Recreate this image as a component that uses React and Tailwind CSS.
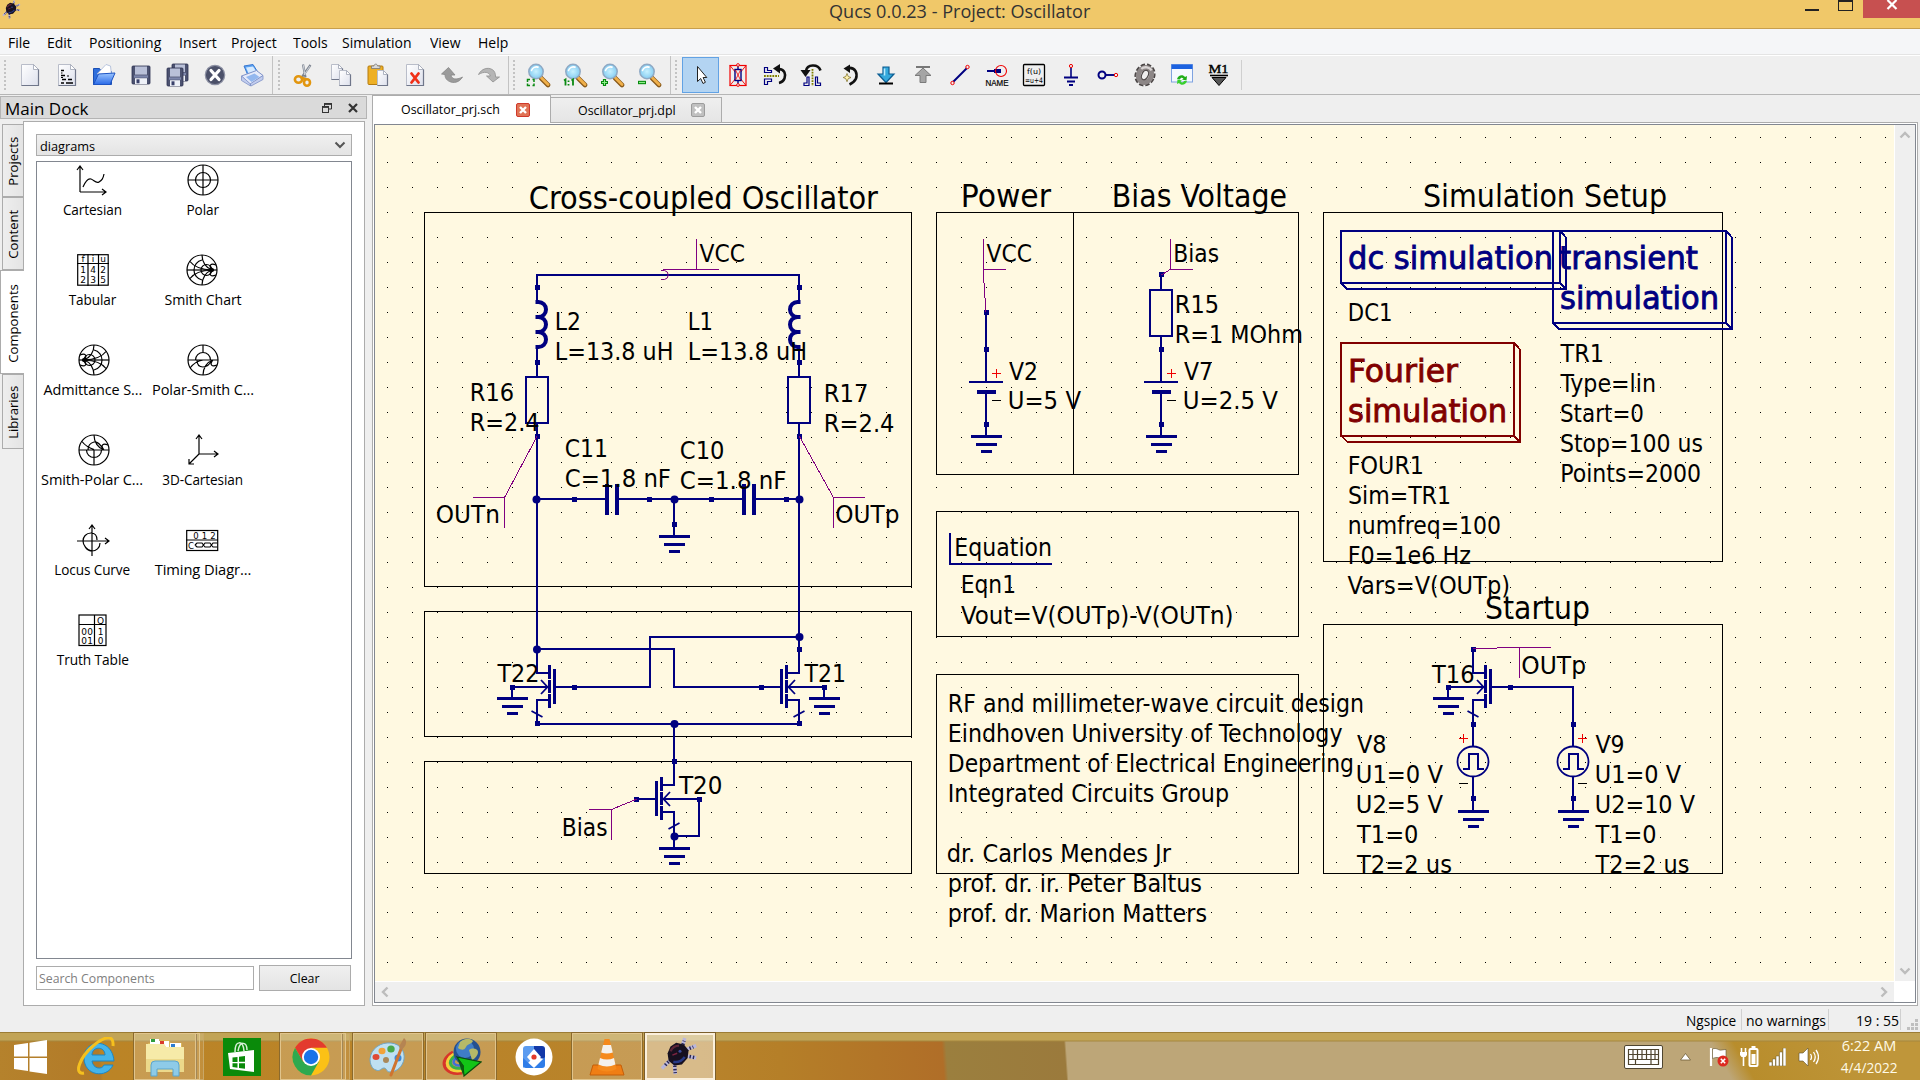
import React from 'react';

const NAVY = '#000080';
const PLUM = '#800080';

/* ---------- toolbar icons (26 x 26) ---------- */

function Ico({ children }) {
  return (
    <svg width="26" height="26" viewBox="0 0 26 26" fill="none">
      {children}
    </svg>
  );
}

const Page = ({ x = 4.5, y = 2.5, w = 17, h = 21, f = 5 }) => (
  <g>
    <path d={`M${x} ${y}h${w - f}l${f} ${f}v${h - f}h-${w}z`} fill="url(#paper)" stroke="#b9bdc9" strokeWidth="1" />
    <path d={`M${x + w - f} ${y}v${f}h${f}z`} fill="#fff" stroke="#9da3b3" strokeWidth="0.8" />
    <path d={`M${x + w} ${y + f}v${h - f}h-${w}`} stroke="#6f768a" strokeWidth="1.2" />
  </g>
);

const Floppy = ({ x = 4, y = 4, w = 18, h = 18 }) => (
  <g>
    <rect x={x} y={y} width={w} height={h} rx="1" fill="#4c5270" stroke="#2c3150" strokeWidth="0.8" />
    <rect x={x + 3} y={y + 0.5} width={w - 6} height={h * 0.45} fill="#b9c0d8" />
    <rect x={x + 2} y={y + h * 0.52} width={w - 4} height={h * 0.13} fill="#7d86ab" />
    <rect x={x + 3} y={y + h * 0.68} width={w - 6} height={h * 0.32} fill="#eef1f8" />
    <rect x={x + 4.5} y={y + h * 0.74} width="3" height={h * 0.22} fill="#39406a" />
  </g>
);

const Lens = ({ children }) => (
  <g>
    <path d="M16 16l7 7" stroke="#8a5a1a" strokeWidth="4.6" strokeLinecap="round" />
    <path d="M16.5 16l6.5 6.4" stroke="#f0b04a" strokeWidth="2.8" strokeLinecap="round" />
    <circle cx="11" cy="9.5" r="7.2" fill="url(#glass)" stroke="#8fa9c4" strokeWidth="1.5" />
    <path d="M6.5 8.5c1-3 4-4 6.5-3.4" stroke="#fff" strokeWidth="1.6" strokeLinecap="round" />
    {children}
  </g>
);

const icons = {
  fresh: <Page />,
  text: (
    <g>
      <Page />
      <path d="M7 8.5h3M7 13.5h4M8 17.5h4M14 17.5h4M7 21h3M12 21h7" stroke="#000" strokeWidth="1.6" />
      <path d="M7 11h1.500M13 14h2M7 15.500h2" stroke="#000" strokeWidth="1" />
    </g>
  ),
  open: (
    <g>
      <path d="M2.5 6.5h6l2 3h10v13h-18z" fill="#2f6fdc" stroke="#1b4fb5" />
      <path d="M6 12l9-9.5 4.5 1.5 1 9z" fill="#fff" stroke="#a8b7d6" strokeWidth="0.8" />
      <path d="M2.5 22.5l5-10.5 16.5-1-5 11.5z" fill="url(#folder)" stroke="#1d54c4" />
    </g>
  ),
  save: <Floppy />,
  saveAll: (
    <g>
      <Floppy x={7} y={2} w={16} h={17} />
      <Floppy x={2} y={6} w={16} h={18} />
    </g>
  ),
  close: (
    <g>
      <circle cx="13" cy="13" r="9.7" fill="#4b5069" stroke="#8d91a4" strokeWidth="1.2" />
      <path d="M9 8.5l8 9M17 8.5l-8 9" stroke="#fff" strokeWidth="3.2" strokeLinecap="round" />
    </g>
  ),
  print: (
    <g>
      <path d="M5 4l9-1.5 5 8-10 3z" fill="#5aa2f2" stroke="#3a78d0" />
      <path d="M7 5.500l7-1 4 6-8 2z" fill="#d6eaff" />
      <path d="M2.5 14l15-5.500 6.500 5-13 9z" fill="#e6ebfa" stroke="#7f92c8" />
      <path d="M2.5 14v4.500l9 5.500v-2z M11 22l13-8.500v4l-12 6.500z" fill="#c2cdee" stroke="#7f92c8" strokeWidth="0.8" />
      <path d="M7 15l8.500-3.500 5 3.500-8 5z" fill="#93b7ee" />
    </g>
  ),
  cut: (
    <g>
      <path d="M12 2.500l2.500 13M19.500 3l-8.500 12" stroke="#7d8490" strokeWidth="2.200" />
      <path d="M12.200 3l1.800 10M19 4l-6 9" stroke="#d7dbe2" strokeWidth="0.900" />
      <ellipse cx="7.500" cy="17.500" rx="3.600" ry="3.300" stroke="#e2960f" strokeWidth="2.600" />
      <ellipse cx="16" cy="20.500" rx="3" ry="3.300" stroke="#e2960f" strokeWidth="2.600" />
      <path d="M10 15.500l5 2" stroke="#e2960f" strokeWidth="2.600" />
    </g>
  ),
  copy: (
    <g>
      <Page x={3.5} y={2.5} w={11} h={15} f={4} />
      <Page x={11.500} y={8.500} w={11} h={15} f={4} />
    </g>
  ),
  paste: (
    <g>
      <rect x="3" y="4" width="15" height="18.500" rx="1" fill="#eeb025" stroke="#b47b10" />
      <path d="M6.500 6.500v-2.500h2.500c0-2.500 3.500-2.500 3.500 0h2.500v2.500z" fill="#d9d9d9" stroke="#777" strokeWidth="0.800" />
      <Page x={12.500} y={8.500} w={10} h={15} f={4} />
    </g>
  ),
  remove: (
    <g>
      <Page />
      <path d="M9.500 11.500l7 9M16.500 11.500l-7 9" stroke="#f03018" strokeWidth="2.800" strokeLinecap="round" />
    </g>
  ),
  undo: (
    <path d="M2.500 12l7-6.500 6.500 7.500h-4c.5 4 5 5.500 11.500 2-3 5.500-9 6.500-13 4.500-3.500-1.700-4.500-4-4.500-7z" fill="#9b9b9b" stroke="#858585" strokeWidth="0.800" />
  ),
  redo: (
    <path d="M23.500 15l-6.500 5-6.500-6h3.800c-1-4-6-5-11.800-1.500 3-6 9.500-7.500 13.700-5 2.600 1.600 3.300 4 3.400 7.500z" fill="#b5b5b5" stroke="#8f8f8f" strokeWidth="0.800" />
  ),
  zoomFit: <Lens><path d="M2.500 20v-2.500H5M7.500 17.500H9V20M2.500 21.500V23.500H5M7.500 23.500H9V21.500" stroke="#0a8a12" strokeWidth="1.500" /></Lens>,
  zoomOne: (
    <Lens>
      <path d="M2 18.500l1.500-1v6M9.500 18.500l1.500-1v6" stroke="#0a8a12" strokeWidth="1.800" />
      <path d="M6.500 18.500v1.500M6.500 22v1.500" stroke="#0a8a12" strokeWidth="1.800" />
    </Lens>
  ),
  zoomIn: (
    <Lens>
      <path d="M5.500 17v7M2 20.500h7" stroke="#078a0e" strokeWidth="3.200" />
      <path d="M5.500 18v5M3 20.500h5" stroke="#8df08a" strokeWidth="1" />
    </Lens>
  ),
  zoomOut: (
    <Lens>
      <path d="M2 20.500h8" stroke="#078a0e" strokeWidth="3.400" />
      <path d="M3 20.500h6" stroke="#8df08a" strokeWidth="1.200" />
    </Lens>
  ),
  select: <path d="M9.500 4.500v15l3.200-3 2.300 5 2.400-1.200-2.300-4.800h3.700z" fill="#fff" stroke="#222" strokeWidth="1" />,
  deactivate: (
    <g>
      <rect x="5" y="3.500" width="16" height="20" stroke="#f00000" strokeWidth="1.200" />
      <path d="M5 3.500l16 20M21 3.500l-16 20" stroke="#f00000" strokeWidth="0.900" />
      <path d="M13 3v4M13 19v4" stroke={NAVY} strokeWidth="1.400" />
      <rect x="10" y="7.500" width="6" height="11" fill="#efefef" stroke={NAVY} strokeWidth="1.400" />
      <path d="M10.500 8l5 10M15.500 8l-5 10" stroke="#f00000" strokeWidth="0.800" />
      <circle cx="13" cy="3" r="1.400" stroke="#f00000" fill="#efefef" strokeWidth="0.900" />
      <circle cx="13" cy="23" r="1.400" stroke="#f00000" fill="#efefef" strokeWidth="0.900" />
    </g>
  ),
  mirrorX: (
    <g>
      <path d="M2.500 5.500v5h7v-2h-4v-3zM2.500 22.500v-5.500h7v2.500h-4v3z" stroke={NAVY} strokeWidth="1.200" />
      <path d="M2 14h15" stroke="#808000" strokeWidth="1.800" strokeDasharray="1.800 1" />
      <path d="M16 7c7-.5 8 6 6.500 9.500-1 2.500-3 4-5.500 4.500" stroke="#111" strokeWidth="2.600" />
      <path d="M11 6.500l7-4.500v9.500z" fill="#111" />
    </g>
  ),
  mirrorY: (
    <g>
      <path d="M5 23.500h5v-8.500H8v6H5zM21.500 23.500h-5v-8.500h2v6h3z" stroke={NAVY} strokeWidth="1.200" />
      <path d="M13.500 7v17" stroke="#808000" strokeWidth="1.800" strokeDasharray="1.800 1" />
      <path d="M7 9c1-7 12-7.500 14.500-.5" stroke="#111" strokeWidth="2.600" />
      <path d="M1.500 8h10l-5 7z" fill="#111" />
    </g>
  ),
  rotate: (
    <g>
      <path d="M12 6c8-1 9.500 6 8 10.500-1.200 2.700-3.500 4.500-6.500 6" stroke="#111" strokeWidth="2.600" />
      <path d="M7.500 6.500l6.500-4v8.500z" fill="#111" />
      <path d="M11 11.500l1.200 3 2.800 1-2.800 1.200-1.200 3-1.200-3-2.600-1.200 2.600-1z" fill="#fff3b0" stroke="#7a6a20" strokeWidth="0.700" />
    </g>
  ),
  into: (
    <g>
      <path d="M10 5h6v7h5l-8 8.500-8-8.500h5z" fill="#35a9dc" stroke="#0a5c92" strokeWidth="1.200" />
      <path d="M11.500 6.500v7" stroke="#b8ecff" strokeWidth="1.600" />
      <path d="M6 21.500h14" stroke="#000" strokeWidth="2" />
    </g>
  ),
  outOf: (
    <g>
      <path d="M6 5h14" stroke="#777" strokeWidth="2" />
      <path d="M10 20.500h6v-7h5l-8-7.500-8 7.500h5z" fill="#a5a5a5" stroke="#7b7b7b" strokeWidth="1" />
    </g>
  ),
  wire: (
    <g>
      <path d="M6 20L20 6" stroke={NAVY} strokeWidth="1.900" />
      <circle cx="5.500" cy="21" r="1.700" fill="#efefef" stroke="#f00000" />
      <circle cx="20.500" cy="5" r="1.700" fill="#efefef" stroke="#f00000" />
    </g>
  ),
  label: (
    <g>
      <path d="M3 9h8" stroke={NAVY} strokeWidth="2" />
      <path d="M10 9h7" stroke={NAVY} strokeWidth="4" />
      <circle cx="17" cy="9" r="5.500" stroke="#f00000" strokeWidth="1.100" />
      <text x="1.500" y="23.500" fontFamily="Liberation Sans, sans-serif" fontSize="8.500" fill="#000" stroke="#000" strokeWidth="0.200" textLength="23" lengthAdjust="spacingAndGlyphs">NAME</text>
    </g>
  ),
  equation: (
    <g>
      <rect x="2.500" y="2.500" width="21" height="21" rx="1" stroke="#000" strokeWidth="1.300" />
      <text x="6" y="11.500" fontFamily="DejaVu Sans, sans-serif" fontSize="7.500" fill="#000" textLength="14" lengthAdjust="spacingAndGlyphs">f(u)</text>
      <text x="4" y="20.500" fontFamily="DejaVu Sans, sans-serif" fontSize="7.500" fill="#000" textLength="18" lengthAdjust="spacingAndGlyphs">=u+4</text>
    </g>
  ),
  ground: (
    <g>
      <path d="M13 6v9" stroke={NAVY} strokeWidth="1.600" />
      <path d="M6 15.500h14M9 19.500h8M11 23h4" stroke={NAVY} strokeWidth="1.900" />
      <circle cx="13" cy="4" r="1.600" stroke="#f00000" />
    </g>
  ),
  port: (
    <g>
      <circle cx="7" cy="13" r="3.500" stroke={NAVY} strokeWidth="2" />
      <path d="M10.500 13h9" stroke={NAVY} strokeWidth="1.900" />
      <circle cx="21" cy="13" r="1.700" fill="#efefef" stroke="#f00000" />
    </g>
  ),
  gear: (
    <g transform="rotate(25 13 13)">
      <ellipse cx="13" cy="13" rx="8.800" ry="10.200" stroke="#4a4545" strokeWidth="3" strokeDasharray="4.200 1.800" />
      <ellipse cx="13" cy="13" rx="6.500" ry="7.600" stroke="#8d8787" strokeWidth="5" />
      <path d="M7 9c2-4 7-5 10-3" stroke="#d9d5d5" strokeWidth="2.400" />
      <ellipse cx="13" cy="13" rx="3.200" ry="5" fill="#efefef" stroke="#4a4545" strokeWidth="1.200" />
    </g>
  ),
  view: (
    <g>
      <rect x="2.500" y="2.500" width="21" height="17.500" fill="#f4f8ff" stroke="#7fa3e0" />
      <rect x="2.500" y="2.500" width="21" height="4.500" fill="#1c62e0" />
      <path d="M8 17c1-4 6-5 8-2l2-1-.5 4.500-4.500-1 1.500-1c-1.500-1.500-3-1-3.500 1z" fill="#1fae1a" />
      <path d="M18 19c-1 4-6 5-8 2l-2 1 .5-4.500 4.500 1-1.500 1c1.500 1.500 3 1 3.500-.5z" fill="#38d02c" />
    </g>
  ),
  marker: (
    <g>
      <text x="2.500" y="11" fontFamily="Liberation Serif, serif" fontSize="13" fill="#000" stroke="#000" strokeWidth="0.400" textLength="20" lengthAdjust="spacingAndGlyphs">M1</text>
      <path d="M4 13.500h18" stroke="#000" strokeWidth="1.600" />
      <path d="M6 15.500h14l-7 8z" fill="#555" stroke="#000" />
    </g>
  ),
};

const groups = [
  { cls: 'w-[273px] pl-[11px] border-r', items: ['fresh', 'text', 'open', 'save', 'saveAll', 'close', 'print'], grip: 'ml-[-7px]' },
  { cls: 'w-[236px] pl-[12px] border-r', items: ['cut', 'copy', 'paste', 'remove', 'undo', 'redo'], grip: 'ml-[-7px]' },
  { cls: 'w-[162px] pl-[10px] border-r', items: ['zoomFit', 'zoomOne', 'zoomIn', 'zoomOut'], grip: 'ml-[-6px]' },
  {
    cls: 'w-[570px] pl-[11px]',
    items: ['select', 'deactivate', 'mirrorX', 'mirrorY', 'rotate', 'into', 'outOf', 'wire', 'label', 'equation', 'ground', 'port', 'gear', 'view', 'marker'],
    grip: 'ml-[-7px]',
  },
];

function Grip({ cls }) {
  return (
    <div className={`flex w-[2px] shrink-0 flex-col gap-[2px] ${cls}`}>
      {Array.from({ length: 8 }, (_, i) => (
        <span key={i} className="h-[2px] w-[2px] bg-[#c3c3c3]" />
      ))}
    </div>
  );
}

function Toolbar() {
  return (
    <div className="flex h-[40px] items-stretch border-t border-b border-t-white border-b-[#b5b5b5] bg-[#efefef]">
      {groups.map((g, gi) => (
        <div key={gi} className={`flex shrink-0 items-center border-[#c3c3c3] ${g.cls}`}>
          <Grip cls={g.grip} />
          <div className={`flex shrink-0 ${gi < 2 ? 'ml-[5px]' : gi === 3 ? 'ml-[5px]' : 'ml-[4px]'}`}>
            {g.items.map((n) => (
              <div
                key={n}
                className={`flex h-[36px] w-[37px] items-center justify-center ${n === 'select' ? 'border border-[#62a2e4] bg-[#b3d4f2]' : ''}`}
              >
                <Ico>{icons[n]}</Ico>
              </div>
            ))}
          </div>
        </div>
      ))}
      <div className="my-[4px] w-px bg-[#cfcfcf]" />
    </div>
  );
}

/* ---------- title bar and menu ---------- */

function Bug({ size }) {
  return (
    <svg width={size} height={size} viewBox="0 0 42 42">
      <path d="M23 11L26 1M28 13l10-4M11 24L2 33M15 27l1 12M28 20l10 2" stroke="#b9b6dc" strokeWidth="3.600" />
      <path d="M24 8l1.500-4M31 12l4-1.500M9 26l-5 5M15.500 30l.5 8M31 20.500l5 1" stroke="#2b2750" strokeWidth="3.600" strokeDasharray="1.500 2" />
      <path d="M8 17l3-7 6-4 8 2 5 6-1 8-6 7-8 1-6-5z" fill="#17101f" />
      <path d="M11 15c2-4 5-6 9-6" stroke="#5c2436" strokeWidth="2.500" fill="none" />
      <path d="M14 26c5 1 9-1 12-5" stroke="#283a86" strokeWidth="2.600" fill="none" />
      <path d="M13 19l5-2" stroke="#7d2440" strokeWidth="1.600" />
      <circle cx="21" cy="15" r="1.600" fill="#3c4a9a" />
    </svg>
  );
}

function TitleBar() {
  return (
    <div className="flex h-[29px] items-start border-b border-[#c79f4d] bg-[#f0c869]">
      <div className="w-[829px] pl-[2px]"><Bug size={20} /></div>
      <div className="mt-[-2px] w-[262px] origin-left scale-x-[0.977] text-[18.500px] leading-[25px] whitespace-nowrap text-[#333]">Qucs 0.0.23 - Project: Oscillator</div>
      <div className="ml-auto flex items-start">
        <span className="mt-[9px] h-[2px] w-[14px] bg-[#222]" />
        <span className="ml-[19px] h-[11px] w-[15px] border border-t-2 border-[#222]" />
        <div className="ml-[10px] flex h-[18px] w-[57px] justify-center bg-[#c75050]">
          <svg width="12" height="10" viewBox="0 0 12 10"><path d="M1.500 0l9 9M10.500 0l-9 9" stroke="#fff" strokeWidth="2.200" /></svg>
        </div>
      </div>
    </div>
  );
}

const menus = [
  ['File', 'w-[39px]'], ['Edit', 'w-[42px]'], ['Positioning', 'w-[90px]'], ['Insert', 'w-[52px]'], ['Project', 'w-[62px]'],
  ['Tools', 'w-[49px]'], ['Simulation', 'w-[88px]'], ['View', 'w-[48px]'], ['Help', 'w-[50px]'],
];

function MenuBar() {
  return (
    <div className="flex h-[26px] border-b border-[#e4e4e4] bg-[#f5f6f8] pl-[8px] text-[14.500px] leading-[27px] text-black">
      {menus.map(([m, w]) => (
        <span key={m} className={`${w} origin-left scale-x-[0.965] whitespace-nowrap`}>{m}</span>
      ))}
    </div>
  );
}

/* ---------- dock ---------- */

const Digits = ({ rows, fs = 9 }) => rows.map(([x, y, t], i) => (
  <text key={i} x={x} y={y} fontFamily="DejaVu Sans, sans-serif" fontSize={fs} fill="#000" stroke="none" textAnchor="middle">{t}</text>
));

const SmithHalf = () => (
  <g>
    <path d="M16 6a10 10 0 0 0-8 10a10 10 0 0 0 8 10" />
    <circle cx="20.500" cy="16" r="5.500" />
    <path d="M4 7.500c3 4 8 8 22 8.500M4 24.500c3-4 8-8 22-8.500M16 1c0 7 4 13 10 15M16 31c0-7 4-13 10-15M30 11c-5-2-8 0-4 5M30 21c-5 2-8 0-4-5" />
    <circle cx="26" cy="16" r="1.500" fill="#000" />
  </g>
);

const diagrams = [
  ['Cartesian', <g key="a"><path d="M2 28V2M-1 6l3-4 3 4M2 28h26M24 25l4 3-4 3M5 23c3-7 5-9 8-8s5 5 8 3 4-3 5-8" transform="translate(1 0)" /></g>],
  ['Polar', <g key="b"><circle cx="16" cy="16" r="15" /><circle cx="16" cy="16" r="7.500" /><path d="M1 16h30M16 1v30" /></g>],
  ['Tabular', <g key="c"><rect x="0.700" y="0.700" width="30.500" height="30.500" /><path d="M0 9.500h32M11 0v32M21.500 0v32" /><Digits rows={[[6, 8, 'f'], [16, 8, 'i'], [26, 8, 'u'], [6, 19, '1'], [16, 19, '4'], [26, 19, '2'], [6, 29, '2'], [16, 29, '3'], [26, 29, '5']]} /></g>],
  ['Smith Chart', <g key="d" transform="translate(-1 0)"><circle cx="16" cy="16" r="15" /><path d="M1 16h30" /><SmithHalf /></g>],
  ['Admittance S...', <g key="e" transform="translate(33 0) scale(-1 1)"><circle cx="16" cy="16" r="15" /><path d="M1 16h30" /><SmithHalf /></g>],
  ['Polar-Smith C...', <g key="f"><circle cx="16" cy="16" r="15" /><path d="M1 16h30M16 1v7M8.500 16a7.500 7.500 0 0 1 15 0M3 24c3-4 7-7 13-8M16 31c0-7 4-13 10-15M10 16c0 4 2 7 6 7s7-3 9-7M30 21c-5 2-8 0-4-5" /></g>],
  ['Smith-Polar C...', <g key="g" transform="translate(1 0)"><circle cx="16" cy="16" r="15" /><path d="M1 16h30M16 16v15M8.500 16a7.500 7.500 0 0 0 15 0M4 7.500c3 4 6 6 12 8M16 1c0 7 4 13 10 15M10 16c0-4 2-7 6-8s7 4 10 8M30 11c-5-2-8 0-4 5" /></g>],
  ['3D-Cartesian', <g key="h"><path d="M12 20V1M9 5l3-4 3 4M12 20h19M27 17l4 3-4 3M12 20L2 30M2 25v5h5" /></g>],
  ['Locus Curve', <g key="i"><path d="M0 17h32M28 14l4 3-4 3M15 32V1M12 5l3-4 3 4M20 16c0-5-3-7-6-7-5 0-8 4-8 8s4 10 9 10c4 0 8-3 8-8" /></g>],
  ['Timing Diagr...', <g key="j" transform="translate(-1 0)"><rect x="0.700" y="6.500" width="31" height="20" /><path d="M0 16h32M9 21l2-2h5l3 4h5l3-4h4M9 21l2 2h5l3-4h5l3 4h4" /><Digits fs={8.5} rows={[[10, 14.500, '0'], [18.500, 14.500, '1'], [27, 14.500, '2'], [5, 25, 'C']]} /></g>],
  ['Truth Table', <g key="k"><rect x="2" y="1" width="27" height="30.500" /><path d="M2 10.500h27M17.500 1v31" /><Digits rows={[[23.500, 9.500, 'Q'], [7, 21, '0'], [13, 21, '0'], [23.500, 21, '1'], [7, 30, '0'], [13, 30, '1'], [23.500, 30, '0']]} /></g>],
];

const wide = {
  'Smith Chart': 'scale-x-[1.010]',
  'Admittance S...': 'scale-x-[1.030]',
  'Polar-Smith C...': 'scale-x-[1.040]',
  'Smith-Polar C...': 'scale-x-[1.040]',
  'Timing Diagr...': 'scale-x-[1.050]',
  'Truth Table': 'scale-x-[0.980]',
};

function SideTab({ label, h, active }) {
  return (
    <div className={`flex items-center justify-center border border-[#acacac] pt-[2px] ${h} ${active ? 'w-[24px] border-r-0 bg-white' : 'ml-[2px] w-[22px] bg-gradient-to-r from-[#eeeeee] to-[#e4e4e4]'}`}>
      <span className="rotate-180 text-[13.500px] leading-[18px] whitespace-nowrap [writing-mode:vertical-rl] scale-y-[0.97]">{label}</span>
    </div>
  );
}

function Dock() {
  return (
    <div className="flex w-[367px] shrink-0 flex-col">
      <div className="mt-px flex h-[23px] items-center border border-[#b4b4b4] bg-[#dadada] pl-[4px]">
        <span className="mt-[3px] w-[100px] origin-left scale-x-[1.000] text-[17px] leading-[20px] whitespace-nowrap">Main Dock</span>
        <svg className="ml-auto" width="12" height="12" viewBox="0 0 12 12" fill="none" stroke="#333">
          <path d="M3.500 4V1.500h7V7H8" strokeWidth="1" /><path d="M3 2h8" strokeWidth="1.800" />
          <rect x="1.500" y="4.500" width="6" height="6" fill="#dadada" /><path d="M1 5h7" strokeWidth="1.800" />
        </svg>
        <svg className="mr-[7px] ml-[14px]" width="12" height="12" viewBox="0 0 12 12"><path d="M2 2l8 8M10 2l-8 8" stroke="#333" strokeWidth="2.200" /></svg>
      </div>
      <div className="mt-[2px] flex h-[885px]">
        <div className="z-10 mr-[-1px] flex w-[24px] flex-col pt-[3px]">
          <SideTab label="Projects" h="h-[73px]" />
          <SideTab label="Content" h="h-[73px]" />
          <SideTab label="Components" h="h-[104px]" active />
          <SideTab label="Libraries" h="h-[75px]" />
        </div>
        <div className="flex w-[342px] flex-col border border-[#acacac] bg-white pt-[12px] pl-[12px]">
          <div className="flex h-[22px] w-[316px] items-center border border-[#acacac] bg-gradient-to-b from-[#f0f0f0] to-[#e4e4e4] pl-[3px]">
            <span className="mt-[1px] origin-left scale-x-[0.980] text-[13px] leading-[18px]">diagrams</span>
            <svg className="mr-[5px] ml-auto" width="12" height="8" viewBox="0 0 12 8"><path d="M1.500 1.500L6 6l4.500-4.500" fill="none" stroke="#555" strokeWidth="2" /></svg>
          </div>
          <div className="mt-[5px] grid h-[798px] w-[316px] grid-cols-[111px_110px] content-start border border-[#828790] pt-[2px]">
            {diagrams.map(([label, art]) => (
              <div key={label} className="flex h-[90px] flex-col items-center">
                <svg width="32" height="32" viewBox="0 0 32 32" fill="none" stroke="#000" strokeWidth="1.200" className="overflow-visible">{art}</svg>
                <span className={`mt-[4px] text-[14px] leading-[20px] tracking-[-0.100px] whitespace-nowrap ${wide[label] || 'scale-x-[0.970]'}`}>{label}</span>
              </div>
            ))}
          </div>
          <div className="mt-[6px] flex items-center">
            <div className="flex h-[24px] w-[218px] items-center border border-[#acacac] bg-white pt-[1px] pl-[2px]">
              <span className="origin-left scale-x-[0.945] text-[13px] whitespace-nowrap text-[#808080]">Search Components</span>
            </div>
            <div className="ml-[5px] flex h-[26px] w-[92px] items-center justify-center border border-[#acacac] bg-gradient-to-b from-[#f0f0f0] to-[#e4e4e4] pt-[1px] text-[13px]">
              <span className="scale-x-[0.950]">Clear</span>
            </div>
          </div>
        </div>
      </div>
    </div>
  );
}

/* ---------- schematic primitives ---------- */

const W = ({ d, w = 2, c = NAVY }) => <path d={d} stroke={c} strokeWidth={w} fill="none" />;
const Node = ({ x, y }) => <rect x={Math.round(x - 2.5)} y={Math.round(y - 2.5)} width="5" height="5" fill={NAVY} />;
const Dot = ({ x, y }) => <circle cx={x} cy={y} r="4" fill={NAVY} />;
const Box = ({ x, y, r, b }) => <rect x={x} y={y} width={r - x} height={b - y} stroke="#000" strokeWidth="1" fill="none" />;

const Gnd = ({ x, y, from }) => (
  <g>
    <W d={`M${x} ${from}V${y}`} />
    <W w={3} d={`M${x - 15} ${y + 0.5}h31M${x - 10} ${y + 8.5}h21M${x - 5} ${y + 15.5}h11`} />
  </g>
);

const Mos = ({ x, y, flip, top, bottom, bulk = 25, slash = 27 }) => (
  <g transform={`translate(${x} ${y}) scale(${flip ? -1 : 1} 1)`}>
    <W w={3} d="M-17.500 -18V17M-12.500 -22V-8M-12.500 -7V6M-12.500 7V21" />
    <W d={`M-12.500 -14H0V${top - y}M-12.500 13H0V${bottom - y}M-37 0H-18M-12 0H${bulk}`} />
    <g shapeRendering="auto">
      <W w={1.8} d={`M-4 -7L-10.500 0L-4 7M-5.500 ${slash + 3}L5.500 ${slash - 3}`} />
    </g>
    <rect x="-40" y="-2.500" width="5" height="5" fill={NAVY} />
    <rect x={bulk - 2.5} y="-2.500" width="5" height="5" fill={NAVY} />
  </g>
);

const Resistor = ({ x, y }) => <rect x={x - 11} y={y} width="22" height="46" fill="none" stroke={NAVY} strokeWidth="2" />;

const Coil = ({ x, s }) => (
  <g shapeRendering="auto">
    <W w={4} d={`M${x - s * 1.500} 302h${s * 3}a7.500 7.500 0 0 ${s > 0 ? 1 : 0} 0 15h${-s * 3}h${s * 3}a7.500 7.500 0 0 ${s > 0 ? 1 : 0} 0 15h${-s * 3}h${s * 3}a7.500 7.500 0 0 ${s > 0 ? 1 : 0} 0 15h${-s * 3}`} />
  </g>
);

const Plus = ({ x, y }) => <W c="#f00000" w={1} d={`M${x - 4} ${y + 0.5}h9M${x + 0.5} ${y - 4}v9`} />;
const Minus = ({ x, y }) => <W c="#000" w={1} d={`M${x - 4} ${y + 0.5}h9`} />;

const Pulse = ({ x }) => (
  <g>
    <ellipse shapeRendering="auto" cx={x} cy="761.500" rx="15.500" ry="15" fill="none" stroke={NAVY} strokeWidth="1.800" />
    <W d={`M${x - 10} 769h6v-15h9v15h6`} />
    <W d={`M${x} 724V746M${x} 776V811`} />
    <Gnd x={x} y={811} from={800} />
    <Node x={x} y={724} />
    <Node x={x} y={798.5} />
  </g>
);

const Battery = ({ x }) => (
  <g>
    <W d={`M${x - 17} 382h34M${x} 349V382M${x} 392V436`} />
    <W w={4} d={`M${x - 9} 392h19`} />
    <Gnd x={x} y={436} from={424} />
    <Node x={x + 0.500} y={349.500} />
    <Node x={x + 0.500} y={424.500} />
    <Plus x={x + 10} y={373} />
    <Minus x={x + 10} y={400} />
  </g>
);

const SimBox = ({ x, y, r, b, c }) => (
  <W c={c} d={`M${x} ${y}H${r}V${b}H${x}ZM${r} ${y}l5.500 6V${b + 6}H${x + 6}l-6 -6M${r} ${b}l5.500 6`} />
);

/* [x start, baseline, x end, string] */
const titles = [
  [530, 209, 877, 'Cross-coupled Oscillator'],
  [962, 207, 1050, 'Power'],
  [1113, 207, 1286, 'Bias Voltage'],
  [1423, 207, 1666, 'Simulation Setup'],
  [1485, 619, 1589, 'Startup'],
];
const simTitles = [
  [1350, 269, 1551, 'dc simulation', NAVY],
  [1561, 269, 1696, 'transient', NAVY],
  [1562, 309, 1717, 'simulation', NAVY],
  [1350, 382, 1456, 'Fourier', '#800000'],
  [1350, 422, 1505, 'simulation', '#800000'],
];
const labels = [
  [699.500, 262, 744, 'VCC'], [556, 330, 580, 'L2'], [556, 360, 672.500, 'L=13.8 uH'], [689, 330, 712, 'L1'], [689, 360, 806, 'L=13.8 uH'],
  [471, 401, 513, 'R16'], [471, 431, 538.500, 'R=2.4'], [825, 402, 867.500, 'R17'], [825, 432, 893.500, 'R=2.4'],
  [566, 457, 607, 'C11'], [566, 487, 670, 'C=1.8 nF'], [681, 459, 723.500, 'C10'], [681, 489, 785.500, 'C=1.8 nF'],
  [437, 523, 499, 'OUTn'], [836.500, 523, 898.500, 'OUTp'],
  [497.500, 682, 538.500, 'T22'], [804.500, 682, 845, 'T21'], [679, 794, 721.500, 'T20'], [563, 836, 606.500, 'Bias'],
  [986.500, 262, 1031, 'VCC'], [1009, 380, 1037, 'V2'], [1009, 409, 1080, 'U=5 V'],
  [1174.500, 262, 1218, 'Bias'], [1176, 313, 1218, 'R15'], [1176, 343, 1302, 'R=1 MOhm'], [1184, 380, 1212, 'V7'], [1184, 409, 1277, 'U=2.5 V'],
  [955.500, 556, 1051, 'Equation'], [962, 593, 1015, 'Eqn1'], [961, 624, 1232.500, 'Vout=V(OUTp)-V(OUTn)'],
  [949, 712, 1363, 'RF and millimeter-wave circuit design'], [949, 742, 1341.500, 'Eindhoven University of Technology'],
  [949, 772, 1353, 'Department of Electrical Engineering'], [949, 802, 1228, 'Integrated Circuits Group'],
  [948, 862, 1170, 'dr. Carlos Mendes Jr'], [949, 892, 1201, 'prof. dr. ir. Peter Baltus'], [949, 922, 1206, 'prof. dr. Marion Matters'],
  [1349, 321, 1391.500, 'DC1'], [1349, 474, 1423, 'FOUR1'], [1348, 504, 1450, 'Sim=TR1'], [1349, 534, 1500, 'numfreq=100'],
  [1349, 564, 1470, 'F0=1e6 Hz'], [1347.500, 594, 1509, 'Vars=V(OUTp)'],
  [1560.500, 362, 1603, 'TR1'], [1560.500, 392, 1655, 'Type=lin'], [1560, 422, 1643, 'Start=0'], [1560, 452, 1702, 'Stop=100 us'], [1561.500, 482, 1700, 'Points=2000'],
  [1432, 683, 1473.500, 'T16'], [1522.500, 674, 1585, 'OUTp'],
  [1357, 753, 1385.500, 'V8'], [1357, 783, 1442, 'U1=0 V'], [1357, 813, 1442, 'U2=5 V'], [1357, 843, 1417.500, 'T1=0'], [1357, 873, 1451, 'T2=2 us'],
  [1595.500, 753, 1623.500, 'V9'], [1596, 783, 1680, 'U1=0 V'], [1596, 813, 1694, 'U2=10 V'], [1595.500, 843, 1655.500, 'T1=0'], [1595.500, 873, 1688.500, 'T2=2 us'],
];

const inset = (s) => (/^[VTS]/.test(s) ? 0 : 1.2);

let grid = '';
for (let r = 0; r < 34; r += 1) {
  for (let c = 0; c < 61; c += 1) {
    grid += `M${Math.floor(387.2 + c * 24.97)} ${137 + r * 25}h1v1h-1z`;
  }
}

function Schematic() {
  return (
    <svg width="1519" height="856" viewBox="375 125 1519 856" className="block bg-[#fff9e1]">
      <defs>
        <linearGradient id="paper" x1="0" y1="0" x2="1" y2="1"><stop offset="0" stopColor="#fff" /><stop offset="1" stopColor="#dde0ec" /></linearGradient>
        <linearGradient id="folder" x1="0" y1="0" x2="0" y2="1"><stop offset="0" stopColor="#9cc6ff" /><stop offset="1" stopColor="#2a6ae8" /></linearGradient>
        <radialGradient id="glass"><stop offset="0" stopColor="#c8f1ff" /><stop offset="1" stopColor="#86cdf2" /></radialGradient>
      </defs>
      <g shapeRendering="crispEdges">
        <path d={grid} fill="#000" />
        <Box x={424.500} y={212.500} r={911.500} b={586.500} />
        <Box x={424.500} y={611.500} r={911.500} b={736.500} />
        <Box x={424.500} y={761.500} r={911.500} b={873.500} />
        <Box x={936.500} y={212.500} r={1298.500} b={474.500} />
        <Box x={936.500} y={511.500} r={1298.500} b={636.500} />
        <Box x={936.500} y={674.500} r={1298.500} b={873.500} />
        <Box x={1323.500} y={212.500} r={1722.500} b={561.500} />
        <Box x={1323.500} y={624.500} r={1722.500} b={873.500} />
        <W c="#000" w={1} d="M1073.500 212V474" />

        {/* LC tank */}
        <W d="M537 302V274M536 275H800M799 274V302M537 347V376M799 347V376M537 423V673M799 423V673" />
        <Coil x={537} s={1} />
        <Coil x={799} s={-1} />
        <Resistor x={537} y={377} />
        <Resistor x={799} y={377} />
        <W d="M537 499H606M617 499H744M754 499H799" />
        <W w={4} d="M607 484V515M617 484V515M744 484V515M754 484V515" />
        <W d="M674 499V525" />
        <Gnd x={674} y={536} from={524} />
        {[[537, 287.500], [799.500, 287.500], [537, 362.500], [799.500, 362.500], [537, 436.500], [799.500, 436.500], [574.500, 499.500], [649.500, 499.500], [711.500, 499.500], [786.500, 499.500], [674.500, 524.500]].map(([x, y]) => (
          <Node key={`${x}-${y}`} x={x} y={y} />
        ))}

        {/* cross-coupled pair */}
        <W d="M537 649H674V687H762M799 637H650V687H575" />
        <Mos x={537} y={687} flip top={649} bottom={724} />
        <Mos x={799} y={687} top={649} bottom={724} />
        <Gnd x={512} y={698} from={687} />
        <Gnd x={824} y={698} from={687} />
        <W d="M537 724H799M674 724V775" />
        <Node x={537.500} y={723.500} />
        <Node x={799.500} y={723.500} />
        <Node x={799.500} y={649.500} />
        <Node x={674.500} y={761.500} />

        {/* tail transistor */}
        <Mos x={674} y={799} top={761} bottom={836} />
        <W d="M699 799V836H674" />
        <Gnd x={674} y={848} from={836} />

        {/* sources */}
        <W d="M986 312V349M1161 275V289M1161 336V349" />
        <Battery x={986} />
        <Battery x={1161} />
        <Resistor x={1161} y={289.500} />
        <Node x={986.500} y={312.500} />
        <Node x={1161.500} y={274.500} />

        <W d="M950 533V564H1052" />

        {/* start-up circuit */}
        <Mos x={1473} y={687} flip top={649} bottom={724} />
        <Gnd x={1448} y={698} from={687} />
        <W d="M1510 687H1573V724" />
        <Node x={1473.500} y={649.500} />
        <Pulse x={1473} />
        <Pulse x={1573} />
        <Plus x={1463} y={738} />
        <Minus x={1463} y={783} />
        <Plus x={1582} y={738} />
        <Minus x={1582} y={783} />

        <SimBox x={1341} y={231} r={1560} b={283} c={NAVY} />
        <SimBox x={1553} y={231} r={1726} b={323} c={NAVY} />
        <SimBox x={1341} y={343} r={1514} b={435.500} c="#800000" />

        {/* net label leaders */}
        <W c={PLUM} w={1} d="M696.500 239V269M663 269.500H719M537 436.500L504.500 497.500M473 497.500H504.500V528M799.500 436.500L833.500 497.500M865 497.500H833.500V528" />
        <W c={PLUM} w={1} d="M637 799L611.500 809.500M589 809.500H611.500V840M983.500 239V283M984.500 283V298M985.500 298V312M983 269.500H1006M1170.500 239V269.500M1193 269.500H1170L1161.500 275M1473 648.500H1497M1497 647.500H1551M1519.500 647V678" />
      </g>
      <path d="M661 270.500h3.500a4.700 4.600 0 0 1 0 9h-3.500" fill="none" stroke={PLUM} strokeWidth="1" />

      {[[536.500, 499.500], [674.500, 499.500], [799.500, 499.500], [537, 649.500], [799.500, 637], [674.500, 724], [674.500, 836.500]].map(([x, y]) => (
        <Dot key={`${x}-${y}`} x={x} y={y} />
      ))}

      <g fontFamily="'DejaVu Sans Condensed', 'DejaVu Sans', sans-serif">
        <g fontSize="32.500">
          {titles.map(([x, y, r, t]) => (
            <text key={t} x={x - inset(t)} y={y} textLength={r - x + inset(t) + 1} lengthAdjust="spacingAndGlyphs">{t}</text>
          ))}
        </g>
        <g fontSize="32">
          {simTitles.map(([x, y, r, t, c]) => (
            <text key={`${t}${x}${y}`} x={x - 2} y={y} fill={c} stroke={c} strokeWidth="0.800" textLength={r - x + 4} lengthAdjust="spacingAndGlyphs">{t}</text>
          ))}
        </g>
        <g fontSize="25">
          {labels.map(([x, y, r, t]) => (
            <text key={`${t}${x}${y}`} x={x - inset(t)} y={y} textLength={r - x + inset(t) + 1} lengthAdjust="spacingAndGlyphs">{t}</text>
          ))}
        </g>
      </g>
    </svg>
  );
}

/* ---------- document area ---------- */

function CloseBox({ on }) {
  return (
    <svg width="14" height="14" viewBox="0 0 14 14">
      <rect x="0.500" y="0.500" width="13" height="13" rx="1.500" fill={on ? '#e07355' : '#c0c0c0'} stroke={on ? '#d0392b' : '#9c9c9c'} />
      <path d="M4 4l6 6M10 4l-6 6" stroke="#fff" strokeWidth="2.400" />
    </svg>
  );
}

const Arrow = ({ d, w, h }) => (
  <svg width={w} height={h} viewBox={`0 0 ${w} ${h}`}><path d={d} fill="none" stroke="#bcbcbc" strokeWidth="2.400" /></svg>
);

function Workspace() {
  return (
    <div className="ml-[5px] flex w-[1546px] shrink-0 flex-col">
      <div className="flex h-[27px] items-end">
        <div className="z-10 mb-[-1px] flex h-[28px] w-[179px] items-center border border-b-0 border-[#acacac] bg-white pl-[28px]">
          <span className="w-[115px] origin-left scale-x-[0.955] text-[13px] whitespace-nowrap">Oscillator_prj.sch</span>
          <CloseBox on />
        </div>
        <div className="flex h-[25px] w-[171px] items-center border border-b-0 border-l-0 border-[#acacac] bg-gradient-to-b from-[#efefef] to-[#e5e5e5] pl-[27px]">
          <span className="mt-[1px] w-[113px] origin-left scale-x-[0.955] text-[13px] whitespace-nowrap">Oscillator_prj.dpl</span>
          <CloseBox />
        </div>
      </div>
      <div className="h-[884px] border border-[#acacac] bg-white p-px">
        <div className="grid h-[879px] grid-cols-[1519px_20px] grid-rows-[856px_20px] gap-px border border-[#828790] bg-white">
          <Schematic />
          <div className="flex flex-col items-center justify-between bg-[#efefef] py-[6px]">
            <Arrow w={12} h={8} d="M1.500 6.500L6 2l4.500 4.500" />
            <Arrow w={12} h={8} d="M1.500 1.500L6 6l4.500-4.500" />
          </div>
          <div className="flex items-center justify-between bg-[#efefef] px-[6px]">
            <Arrow w={8} h={12} d="M6.500 1.500L2 6l4.500 4.500" />
            <Arrow w={8} h={12} d="M1.500 1.500L6 6l-4.500 4.500" />
          </div>
        </div>
      </div>
    </div>
  );
}

function StatusBar() {
  return (
    <div className="flex h-[26px] items-start justify-end bg-[#efefef] pt-[3px] text-[14px] leading-[23px]">
      <span className="w-[55px] origin-left scale-x-[0.975] whitespace-nowrap">Ngspice</span>
      <span className="h-[21px] w-px bg-[#d0d0d0]" />
      <span className="ml-[4px] w-[82px] origin-left scale-x-[1.000] whitespace-nowrap">no warnings</span>
      <span className="h-[21px] w-px bg-[#d0d0d0]" />
      <span className="ml-[27px] w-[44px] whitespace-nowrap">19 : 55</span>
      <span className="h-[21px] w-px bg-[#d0d0d0]" />
      <svg className="mt-[10px] mr-[2px] ml-[6px]" width="11" height="11" viewBox="0 0 11 11" fill="#bfbfbf">
        <path d="M8 0h3v3H8zM4 4h3v3H4zM8 4h3v3H8zM0 8h3v3H0zM4 8h3v3H4zM8 8h3v3H8z" />
      </svg>
    </div>
  );
}

/* ---------- taskbar ---------- */

const apps = {
  explorer: (
    <svg width="40" height="40" viewBox="0 0 40 40">
      <path d="M3 6h10l2-3h9l2 3h11v28H3z" fill="#d9b95a" />
      <rect x="5" y="2" width="9" height="6" fill="#fff" /><rect x="6" y="2" width="4" height="3" fill="#2f9d3c" />
      <rect x="14" y="4" width="10" height="6" fill="#fff" /><rect x="15" y="4" width="4" height="3" fill="#d93a2c" />
      <rect x="25" y="6" width="11" height="5" fill="#fff" /><rect x="26" y="7" width="4" height="3" fill="#2d7dd2" />
      <path d="M1 7h18l2 3h18v25H1z" fill="#ecd98a" /><path d="M1 7h18l2 3h18v12H1z" fill="#f6eaa8" />
      <path d="M6 39V28q0-4 4-4h20q4 0 4 4v11h-6v-7H12v7z" fill="#8ecbe8" stroke="#5ba5cc" />
    </svg>
  ),
  store: (
    <svg width="38" height="38" viewBox="0 0 38 38">
      <rect width="38" height="38" fill="#0a8a0a" />
      <path d="M5 15l26-3v22L7 31z" fill="#fff" /><path d="M12 14c0-12 8-12 9-1M15 13c2-11 9-9 9-1" stroke="#d8f0d8" strokeWidth="1.500" fill="none" />
      <path d="M9.500 19.500l5-.6v5h-5zM16 18.700l6-.7v5.800h-6zM9.500 25.200h5v4.500l-5-.6zM16 25.200h6v5.600l-6-.8z" fill="#0a8a0a" />
    </svg>
  ),
  chrome: (
    <svg width="38" height="38" viewBox="0 0 38 38">
      <circle cx="19" cy="19" r="18.500" fill="#fbc116" />
      <path d="M19 9.700h16A18.500 18.500 0 0 0 3 9.700l8 14z" fill="#e33b2e" />
      <path d="M3 9.700A18.500 18.500 0 0 0 19 37.500l8-14-8 4-8-4z" fill="#2da94f" />
      <circle cx="19" cy="19" r="9" fill="#fff" /><circle cx="19" cy="19" r="7.200" fill="#1a73e8" />
    </svg>
  ),
  paint: (
    <svg width="40" height="40" viewBox="0 0 40 40">
      <path d="M2 22C3 11 13 5 23 6s14 9 13 16-7 13-14 13c-4 0-3-4-6-4-3 0-4 4-8 2-4-1-6-6-6-11z" fill="#bfe0f2" stroke="#6fa6c6" />
      <ellipse cx="8" cy="20" rx="3.500" ry="3" fill="#df4a35" /><ellipse cx="14" cy="14" rx="3.500" ry="3.200" fill="#f2a33a" />
      <ellipse cx="23" cy="12" rx="3.700" ry="3.500" fill="#49a84a" /><ellipse cx="30" cy="21" rx="3.500" ry="3.500" fill="#3b86d6" /><circle cx="18" cy="23" r="3" fill="#a9885a" />
      <path d="M33 12L23 38" stroke="#cf7430" strokeWidth="3" strokeLinecap="round" /><path d="M36 1c4 3 2 9-3 12-4-3 0-6 3-12z" fill="#b58452" />
    </svg>
  ),
  idm: (
    <svg width="42" height="40" viewBox="0 0 42 40">
      <path d="M13 15C-3 24 4 39 22 36" stroke="#d8352a" strokeWidth="3" fill="none" /><path d="M14 17C2 24 7 36 22 33.500" stroke="#f4d03a" strokeWidth="3" fill="none" />
      <path d="M15 19C6 25 11 33 23 31" stroke="#36b24a" strokeWidth="3" fill="none" /><path d="M16 21C11 25 14 30 23 28" stroke="#3f6fd8" strokeWidth="2.500" fill="none" />
      <circle cx="27" cy="15" r="13.500" fill="#24508f" /><circle cx="25" cy="12" r="9" fill="#3f7cc6" />
      <path d="M20 5c5-4 10-4 13-1-2 4-5 2-7 6s-5 3-8 1zM29 13c4-3 9-1 9 2s-3 7-6 8z" fill="#b5b968" />
      <path d="M17 20l24 5-17 14-1-10z" fill="#12c416" stroke="#0a4d0c" strokeWidth="1.200" /><path d="M17 20l7 9-1 9z" fill="#0b5d10" />
    </svg>
  ),
  anydesk: (
    <svg width="38" height="38" viewBox="0 0 38 38">
      <circle cx="19" cy="19" r="18.500" fill="#fff" />
      <path d="M8 11q0-3 3-3h8v11L8 30z" fill="#5b9bf0" /><path d="M19 8h8q3 0 3 3v10L19 19z" fill="#1238a8" /><path d="M8 20l11 10H11q-3 0-3-3zM19 30h8q3 0 3-3v-8z" fill="#2f7de8" />
      <path d="M19 11l7 8-7 8-7-8z" fill="#fff" /><circle cx="19" cy="19" r="2.600" fill="#e23a2a" />
    </svg>
  ),
  vlc: (
    <svg width="38" height="40" viewBox="0 0 38 40">
      <path d="M5 28h28l3 10H2z" fill="#f07e14" stroke="#c45e08" /><path d="M16.500 2h5l7 30q-9.500 5-19 0z" fill="#f58a1c" />
      <path d="M15 8h8l1.800 7.500q-6 2-11.600 0zM12 21q7 3 14 0l1.400 6.500q-8.500 4-17 0z" fill="#f4f1ec" />
    </svg>
  ),
  qucs: <Bug size={40} />,
};

const tasks = [
  ['explorer', 'stack'], ['store', ''], ['chrome', 'stack'], ['paint', 'open'], ['idm', 'open'], ['anydesk', ''], ['vlc', 'open'], ['qucs', 'active'],
];

function TaskButton({ id, state }) {
  const look =
    state === 'active'
      ? 'border-2 border-[#fbf0dc] bg-white/45 outline outline-1 outline-[#7b5f2c]'
      : state
        ? 'border border-[#e0c48c] bg-white/20 outline outline-1 outline-[#8b6a2d]'
        : '';
  return (
    <div className="flex h-[47px] w-[70px] items-stretch">
      <div className={`flex flex-1 items-center justify-center ${look}`}>{apps[id]}</div>
      {state === 'stack' && (
        <>
          <div className="w-[4px] border-y border-r border-[#e0c48c] bg-white/20" />
          <div className="w-[4px] border-y border-r border-[#c9a766] bg-white/10" />
        </>
      )}
    </div>
  );
}

function Taskbar() {
  return (
    <div className="flex h-[48px] flex-col border-t border-[#9c7d35]">
      <div className="flex h-[47px] items-stretch bg-[linear-gradient(to_bottom,rgba(194,164,86,1)_0px,rgba(194,164,86,1)_7px,rgba(165,135,62,1)_8px,transparent_9px),linear-gradient(86deg,#b5822c_0px,#b27a28_100px,#bb8426_103px,#b8832b_700px,#b57f28_780px,#b06e28_942px,#9b7f3e_946px,#9b7a3c_1064px,transparent_1066px),linear-gradient(60deg,#bda678_1500px,#b88d2c_1520px,#bf963a_1640px)]">
        <div className="flex w-[60px] items-center justify-center">
          <svg width="33" height="34" viewBox="0 0 33 34" fill="#fff"><path d="M0 5l14-2v13.500H0zM15.500 2.700L33 0v16.500H15.500zM0 18h14v13L0 29zM15.500 18H33v16l-17.500-2.600z" /></svg>
        </div>
        <div className="flex w-[74px] items-center justify-center">
          <svg width="42" height="40" viewBox="0 0 42 40">
            <path d="M37 28c-6 14-29 11-29-7 0-19 28-21 30 3H16c1 8 10 9 12 4zM16 18h13c0-9-13-9-13 0z" fill="#45b4ea" stroke="#1d86c4" strokeWidth="1" />
            <path d="M8 36C-3 38 4 20 17 9S38-2 37 9" stroke="#f5c01e" strokeWidth="3" fill="none" />
          </svg>
        </div>
        <div className="flex gap-[3px]">
          {tasks.map(([id, state]) => <TaskButton key={id} id={id} state={state} />)}
        </div>
        <div className="mr-[20px] ml-auto flex items-center">
          <svg width="39" height="24" viewBox="0 0 39 24" fill="none" stroke="#4f4530">
            <rect x="0.500" y="0.500" width="38" height="23" rx="1.500" fill="#fff" />
            <path d="M4.500 4.500h30v15h-30zM4.500 9.500h30M4.500 14.500h30M9 4v10M13.500 4v10M18 4v10M22.500 4v10M27 4v10M31 4v10M11.500 14v6M27 14v6" strokeWidth="1.200" />
          </svg>
          <svg className="ml-[17px]" width="11" height="8" viewBox="0 0 11 8"><path d="M5.500.5l5 6.500h-10z" fill="#fff" stroke="#6d5c34" strokeWidth="0.800" /></svg>
          <svg className="ml-[18px]" width="20" height="20" viewBox="0 0 20 20">
            <path d="M2 1v18" stroke="#fff" strokeWidth="2.200" /><path d="M3.500 2c4-2 6 2 9.500 1 1.500-.3 3-.5 4-.5v9c-4 2-6-1-9-1-2 0-3 .5-4.500 1z" fill="#fff" stroke="#5d4f2e" strokeWidth="0.600" />
            <circle cx="14" cy="14" r="5.500" fill="#dc2a20" /><path d="M11.800 11.800l4.400 4.400M16.200 11.800l-4.400 4.400" stroke="#fff" strokeWidth="1.600" />
          </svg>
          <svg className="ml-[11px]" width="19" height="21" viewBox="0 0 19 21" fill="none" stroke="#fff">
            <path d="M1.500 2v4M5.500 2v4M3.500 11v9" strokeWidth="1.600" /><path d="M0 6h7v3l-1.500 2h-4L0 9z" fill="#fff" stroke="none" />
            <rect x="9.500" y="3" width="8" height="17" rx="1" strokeWidth="2" /><path d="M11.500 1h4" strokeWidth="2" /><rect x="11.500" y="8" width="4" height="10" fill="#fff" stroke="none" />
          </svg>
          <svg className="ml-[10px]" width="17" height="18" viewBox="0 0 17 18" fill="#fff" stroke="#6a5828" strokeWidth="0.500"><path d="M0 14h3v4H0zM3.500 11h3v7h-3zM7 8h3v10H7zM10.500 4h3v14h-3zM14 0h3v18h-3z" /></svg>
          <svg className="ml-[12px]" width="21" height="20" viewBox="0 0 21 20" fill="none" stroke="#fff">
            <path d="M1 6h4l5-5v18l-5-5H1z" fill="#fff" stroke="#5d4f2e" strokeWidth="0.600" /><path d="M12.500 7q2 3 0 6M15.500 5q3.500 5 0 10M18 3q5 7 0 14" strokeWidth="1.300" />
          </svg>
          <div className="ml-[19px] flex w-[62px] flex-col items-center pt-[1px] text-[14.500px] leading-[22px] whitespace-nowrap text-[#fffbe8]">
            <span className="scale-x-[1.000]">6:22 AM</span>
            <span className="scale-x-[0.940]">4/4/2022</span>
          </div>
        </div>
      </div>
    </div>
  );
}

export default function App() {
  return (
    <div className="flex h-[1080px] w-[1920px] flex-col overflow-hidden bg-[#efefef] font-['Open_Sans','Noto_Sans',sans-serif] text-black">
      <TitleBar />
      <MenuBar />
      <Toolbar />
      <div className="flex h-[911px]">
        <Dock />
        <Workspace />
      </div>
      <StatusBar />
      <Taskbar />
    </div>
  );
}
